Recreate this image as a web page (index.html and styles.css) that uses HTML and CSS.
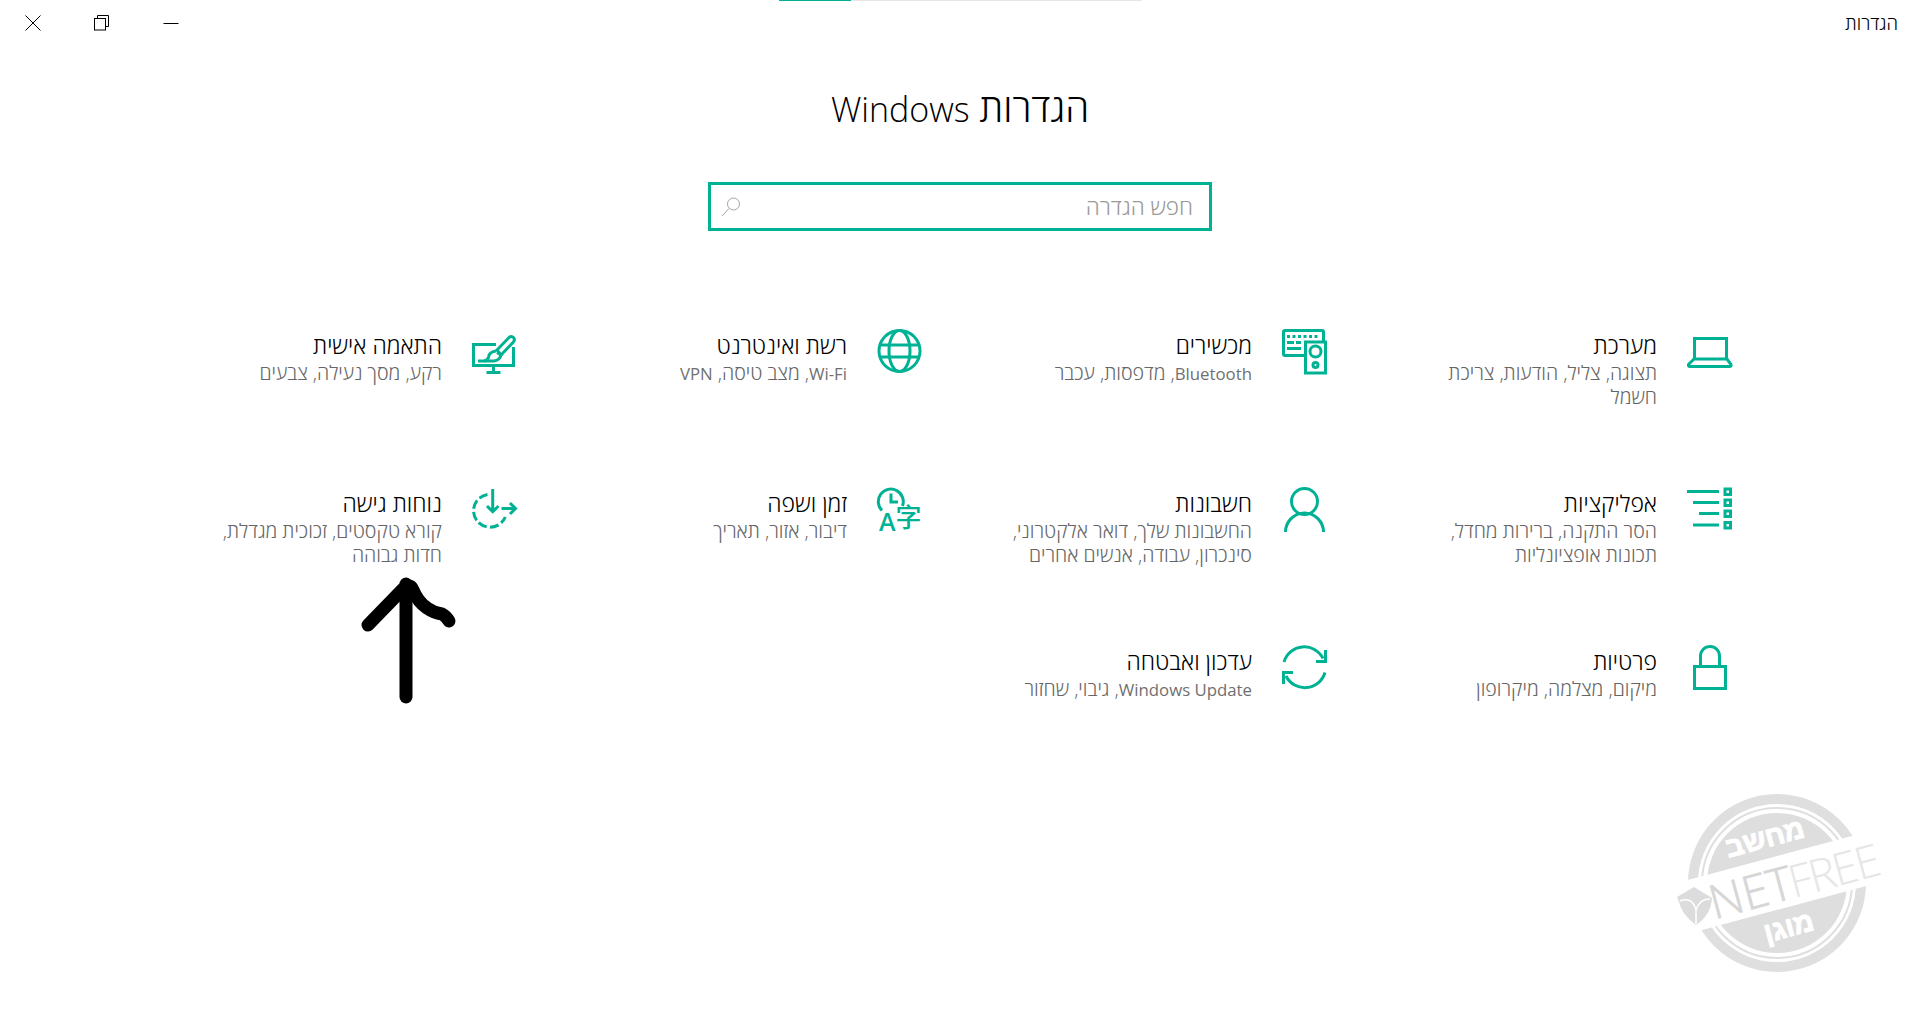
FILE: index.html
```html
<!DOCTYPE html>
<html lang="he" dir="rtl">
<head>
    <meta charset="UTF-8">
    <title>הגדרות</title>
    <link rel="stylesheet" href="styles.css">
</head>
<body>
    <div class="progress"><div class="progress-fill"></div></div>

    <header class="titlebar">
        <span class="app-name">הגדרות</span>
        <div class="window-buttons">
            <svg class="win-icon" viewBox="0 0 16 16"><path d="M0.5 8.5H15.5"/></svg>
            <svg class="win-icon" viewBox="0 0 16 16"><path d="M3.5 3.5V0.5H14.5V11.5H11.5"/><rect x="0.5" y="3.5" width="11" height="11.5"/></svg>
            <svg class="win-icon" viewBox="0 0 16 16"><path d="M0.5 0.5L15.5 15.5M15.5 0.5L0.5 15.5"/></svg>
        </div>
    </header>

    <main>
        <h1 class="page-title">הגדרות <span class="latin-title">Windows</span></h1>

        <div class="search">
            <span class="search-hint">חפש הגדרה</span>
            <svg class="search-icon" viewBox="0 0 20 20"><circle cx="12.5" cy="7" r="6"/><path d="M8 11.5L1 19"/></svg>
        </div>

        <section class="settings-grid">
            <a class="item">
                <svg class="item-icon" viewBox="0 0 45 45"><path d="M7.5 30V9.5H39.5V30"/><path d="M7 30H40L44 35.5Q44.5 37.5 42.5 37.5H3Q1 37.5 1.5 35.5Z"/></svg>
                <div class="item-text">
                    <h2>מערכת</h2>
                    <p>תצוגה, צליל, הודעות, צריכת חשמל</p>
                </div>
            </a>
            <a class="item">
                <svg class="item-icon" viewBox="0 0 45 45">
                    <path d="M22 26.5H3Q1.5 26.5 1.5 25V3Q1.5 1.5 3 1.5H40Q41.5 1.5 41.5 3V12"/>
                    <rect x="23.5" y="13" width="20" height="31"/>
                    <circle cx="33.5" cy="22.5" r="5.5"/>
                    <circle cx="33.5" cy="36" r="2.5"/>
                    <path d="M5 7.5H37" stroke-dasharray="3 2.5"/>
                    <path d="M5 13.5H12M14 13.5H19M5 19.5H19"/>
                </svg>
                <div class="item-text">
                    <h2>מכשירים</h2>
                    <p><span class="latin">Bluetooth</span>, מדפסות, עכבר</p>
                </div>
            </a>
            <a class="item">
                <svg class="item-icon" viewBox="0 0 45 45"><circle cx="22.5" cy="22" r="20.5"/><ellipse cx="22.5" cy="22" rx="10.5" ry="20.5"/><path d="M3.5 16H41.5M3.5 28H41.5"/></svg>
                <div class="item-text">
                    <h2>רשת ואינטרנט</h2>
                    <p><span class="latin">Wi-Fi</span>, מצב טיסה, <span class="latin">VPN</span></p>
                </div>
            </a>
            <a class="item">
                <svg class="item-icon" viewBox="0 0 45 45">
                    <path d="M24 15.5H1.5V36.5H41.5V18"/>
                    <path d="M21.5 37V43M14.5 43.5H28.5"/>
                    <path d="M25 21L37 8.5Q39.5 6.5 41.5 8.5T41 13.5L29 26Z"/>
                    <path d="M24 22Q17 23 16.5 28Q16 31.5 12 32H6"/>
                    <path d="M25 23.5L29 26Q28 31 22 32H12"/>
                </svg>
                <div class="item-text">
                    <h2>התאמה אישית</h2>
                    <p>רקע, מסך נעילה, צבעים</p>
                </div>
            </a>

            <a class="item">
                <svg class="item-icon" viewBox="0 0 45 45">
                    <path d="M0 4.5H32M6 15.5H32M12 26.5H32M6 38H32"/>
                    <rect x="38" y="2" width="5.5" height="5.5"/>
                    <rect x="38" y="13" width="5.5" height="5.5"/>
                    <rect x="38" y="24" width="5.5" height="5.5"/>
                    <rect x="38" y="35.5" width="5.5" height="5.5"/>
                </svg>
                <div class="item-text">
                    <h2>אפליקציות</h2>
                    <p>הסר התקנה, ברירות מחדל, תכונות אופציונליות</p>
                </div>
            </a>
            <a class="item">
                <svg class="item-icon" viewBox="0 0 45 45"><circle cx="22.5" cy="14.5" r="13"/><path d="M3.5 45A19 19 0 0 1 41.5 45"/></svg>
                <div class="item-text">
                    <h2>חשבונות</h2>
                    <p>החשבונות שלך, דואר אלקטרוני, סינכרון, עבודה, אנשים אחרים</p>
                </div>
            </a>
            <a class="item">
                <svg class="item-icon" viewBox="0 0 45 45">
                    <path d="M5 23.5A12.5 12.5 0 1 1 25.5 19"/>
                    <path d="M14 6.5V15H21"/>
                    <text class="glyph-latin" x="2" y="44">A</text>
                    <text class="glyph-cjk" x="18.5" y="40">字</text>
                </svg>
                <div class="item-text">
                    <h2>זמן ושפה</h2>
                    <p>דיבור, אזור, תאריך</p>
                </div>
            </a>
            <a class="item">
                <svg class="item-icon" viewBox="0 0 45 45">
                    <path d="M15.5 7.4A16.5 16.5 0 1 0 33.3 30" stroke-dasharray="9 3.2"/>
                    <path d="M20.7 2V24M15 19L20.7 24.7L26.5 19"/>
                    <path d="M29.5 21.5H44M38 16L43.5 21.5L38 27"/>
                </svg>
                <div class="item-text">
                    <h2>נוחות גישה</h2>
                    <p>קורא טקסטים, זכוכית מגדלת, חדות גבוהה</p>
                </div>
            </a>

            <a class="item">
                <svg class="item-icon" viewBox="0 0 45 45"><rect x="7.5" y="21.5" width="31" height="22"/><path d="M13.5 20V11A9.5 9.5 0 0 1 32.5 11V20"/></svg>
                <div class="item-text">
                    <h2>פרטיות</h2>
                    <p>מיקום, מצלמה, מיקרופון</p>
                </div>
            </a>
            <a class="item">
                <svg class="item-icon" viewBox="0 0 45 45">
                    <path d="M2 17A21 21 0 0 1 41 13.5"/>
                    <path d="M43 27.5A21 21 0 0 1 4 31"/>
                    <path d="M34 16.5H43.5V5"/>
                    <path d="M11 27.5H1.5V39"/>
                </svg>
                <div class="item-text">
                    <h2>עדכון ואבטחה</h2>
                    <p><span class="latin">Windows Update</span>, גיבוי, שחזור</p>
                </div>
            </a>
        </section>
    </main>

    <!-- החץ שצויר מעל צילום המסך -->
    <svg class="arrow" viewBox="0 0 120 140">
        <path d="M56 14V127"/>
        <path d="M18 55L52 20Q60 12 63 20Q68 32 77 38Q84 43 92 44Q96 46 99 51"/>
    </svg>

    <!-- חותמת NetFree -->
    <svg class="stamp" viewBox="0 0 260 210">
        <circle class="stamp-ring" cx="117" cy="103" r="84"/>
        <circle class="stamp-thin" cx="117" cy="103" r="75"/>
        <circle class="stamp-disc" cx="117" cy="103" r="70"/>
        <g transform="rotate(-15 117 103)">
            <rect class="stamp-band" x="0" y="77" width="240" height="52"/>
            <text class="stamp-word" x="117" y="66">מחשב</text>
            <text class="stamp-word" x="117" y="158">מוגן</text>
            <text class="stamp-net" x="47" y="122">NET</text>
            <text class="stamp-free" x="129" y="122">FREE</text>
        </g>
        <path class="stamp-shield" d="M17 117L34 107L52 118Q51 135 36 145Q22 135 19 122Z"/>
        <path class="stamp-shield-line" d="M20 121Q32 116 36 130Q40 118 50 119M36 130V144"/>
    </svg>
</body>
</html>
```

FILE: styles.css
```css
body {
    margin: 0;
    height: 1015px;
    overflow: hidden;
    position: relative;
    background: #fff;
    color: #000;
    font-family: "Open Sans", "Noto Sans", "Liberation Sans", sans-serif;
}

/* פס ההתקדמות למעלה */
.progress {
    position: absolute;
    top: 0;
    left: 779px;
    width: 363px;
    height: 1px;
    background: #e6e6e6;
}

.progress-fill {
    position: absolute;
    left: 0;
    top: 0;
    width: 72px;
    height: 1px;
    background: #00b294;
}

.titlebar {
    height: 46px;
    display: flex;
    justify-content: space-between;
    align-items: center;
    padding: 0 22px 0 25px;
}

.app-name {
    font-size: 18.5px;
    font-weight: 300;
    line-height: 20px;
    margin-top: -1px;
}

.window-buttons {
    display: flex;
    gap: 53px;
}

.win-icon {
    width: 16px;
    height: 16px;
    fill: none;
    stroke: #000;
    stroke-width: 1;
}

main {
    display: flex;
    flex-direction: column;
    align-items: center;
}

.page-title {
    margin: 37px 0 0;
    height: 48px;
    font-size: 38.5px;
    line-height: 48px;
    font-weight: 300;
}

.latin-title {
    font-size: 34px;
}

.search {
    width: 504px;
    height: 49px;
    box-sizing: border-box;
    margin-top: 51px;
    padding: 0 16px 0 10px;
    border: 3px solid #00b294;
    display: flex;
    justify-content: space-between;
    align-items: center;
    color: #9a9a9a;
}

.search-hint {
    font-size: 22.5px;
    font-weight: 300;
}

.search-icon {
    width: 20px;
    height: 20px;
    fill: none;
    stroke: #a6a6a6;
    stroke-width: 1;
}

.settings-grid {
    width: 1620px;
    margin-top: 98px;
    display: grid;
    grid-template-columns: repeat(4, 405px);
    grid-auto-rows: 158px;
}

.item {
    display: flex;
    align-items: flex-start;
    gap: 30px;
    padding-right: 38px;
}

.item-icon {
    flex: none;
    width: 45px;
    height: 45px;
    overflow: visible;
    fill: none;
    stroke: #00b294;
    stroke-width: 3;
}

.glyph-latin, .glyph-cjk {
    fill: #00b294;
    stroke: none;
    direction: ltr;
}

.glyph-latin {
    font-size: 25px;
    font-weight: 600;
}

.glyph-cjk {
    font-family: "Noto Sans CJK SC", sans-serif;
    font-size: 26px;
    font-weight: 500;
}

.item-text {
    width: 246px;
    padding-top: 2px;
}

.item-text h2 {
    margin: 0;
    font-size: 23px;
    line-height: 28px;
    font-weight: 300;
}

.item-text p {
    margin: 2px 0 0;
    font-size: 19.6px;
    line-height: 24px;
    font-weight: 300;
    color: #666;
}

.item-text .latin {
    font-size: 16.8px;
    font-weight: 400;
    color: #707070;
}

.arrow {
    position: absolute;
    left: 350px;
    top: 570px;
    width: 120px;
    height: 140px;
    fill: none;
    stroke: #000;
    stroke-width: 13;
    stroke-linecap: round;
    stroke-linejoin: round;
}

.stamp {
    position: absolute;
    left: 1660px;
    top: 780px;
    width: 260px;
    height: 210px;
}

.stamp-ring {
    fill: none;
    stroke: #dfdfdf;
    stroke-width: 10;
}

.stamp-thin {
    fill: none;
    stroke: #dfdfdf;
    stroke-width: 2;
}

.stamp-disc {
    fill: #dedede;
}

.stamp-band {
    fill: #fff;
}

.stamp-word {
    fill: #fff;
    stroke: #fff;
    stroke-width: 1;
    font-family: "Liberation Sans", sans-serif;
    font-size: 28px;
    font-weight: 700;
    text-anchor: middle;
    direction: rtl;
}

.stamp-net, .stamp-free {
    font-weight: 300;
    direction: ltr;
}

.stamp-net {
    font-size: 47px;
    fill: #d6d6d6;
    stroke: #d6d6d6;
    stroke-width: 0.6;
}

.stamp-free {
    font-size: 45px;
    letter-spacing: -2px;
    fill: #e6e6e6;
}

.stamp-shield {
    fill: #dcdcdc;
}

.stamp-shield-line {
    fill: none;
    stroke: #fff;
    stroke-width: 1.5;
}
```
